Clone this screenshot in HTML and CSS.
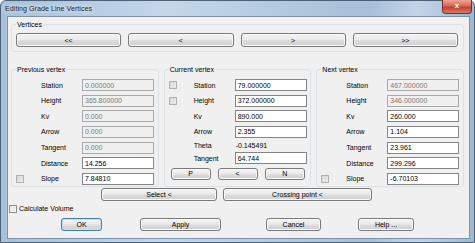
FILE: index.html
```html
<!DOCTYPE html>
<html lang="en">
<head>
    <meta charset="UTF-8">
    <title>Editing Grade Line Vertices</title>
    <link rel="stylesheet" href="styles.css">
</head>
<body>
    <div class="window">
        <div class="titlebar">
            <span class="title">Editing Grade Line Vertices</span>
            <div class="close">x</div>
        </div>
        <div class="client">
            <fieldset class="group vertices">
                <legend>Vertices</legend>
                <div class="nav">
                    <button>&lt;&lt;</button>
                    <button>&lt;</button>
                    <button>&gt;</button>
                    <button>&gt;&gt;</button>
                </div>
            </fieldset>

            <div class="groups">
                <fieldset class="group">
                    <legend>Previous vertex</legend>
                    <div class="fields">
                        <span></span><label>Station</label><input type="text" value="0.000000" disabled>
                        <span></span><label>Height</label><input type="text" value="365.800000" disabled>
                        <span></span><label>Kv</label><input type="text" value="0.000" disabled>
                        <span></span><label>Arrow</label><input type="text" value="0.000" disabled>
                        <span></span><label>Tangent</label><input type="text" value="0.000" disabled>
                        <span></span><label>Distance</label><input type="text" value="14.256">
                        <input type="checkbox" class="check" disabled><label>Slope</label><input type="text" value="7.84810">
                    </div>
                </fieldset>

                <fieldset class="group">
                    <legend>Current vertex</legend>
                    <div class="fields current">
                        <input type="checkbox" class="check" disabled><label>Station</label><input type="text" value="79.000000">
                        <input type="checkbox" class="check" disabled><label>Height</label><input type="text" value="372.000000">
                        <span></span><label>Kv</label><input type="text" value="890.000">
                        <span></span><label>Arrow</label><input type="text" value="2.355">
                        <span></span><label>Theta</label><span class="value">-0.145491</span>
                        <span></span><label>Tangent</label><input type="text" value="64.744">
                        <div class="step">
                            <button>P</button>
                            <button>&lt;</button>
                            <button>N</button>
                        </div>
                    </div>
                </fieldset>

                <fieldset class="group">
                    <legend>Next vertex</legend>
                    <div class="fields">
                        <span></span><label>Station</label><input type="text" value="467.000000" disabled>
                        <span></span><label>Height</label><input type="text" value="346.000000" disabled>
                        <span></span><label>Kv</label><input type="text" value="260.000">
                        <span></span><label>Arrow</label><input type="text" value="1.104">
                        <span></span><label>Tangent</label><input type="text" value="23.961">
                        <span></span><label>Distance</label><input type="text" value="299.296">
                        <input type="checkbox" class="check" disabled><label>Slope</label><input type="text" value="-6.70103">
                    </div>
                </fieldset>
            </div>

            <div class="select-row">
                <button class="btn-select">Select &lt;</button>
                <button class="btn-crossing">Crossing point &lt;</button>
            </div>

            <label class="calc"><input type="checkbox" class="check"> Calculate Volume</label>

            <div class="actions">
                <button class="btn-ok">OK</button>
                <button class="btn-apply">Apply</button>
                <button class="btn-cancel">Cancel</button>
                <button class="btn-help">Help ...</button>
            </div>
        </div>
    </div>
</body>
</html>
```

FILE: styles.css
```css
* {
    box-sizing: border-box;
}
body {
    margin: 0;
    font-family: "Liberation Sans", Arial, sans-serif;
    font-size: 7px;
    color: #000;
    background: #fff;
}
.window {
    width: 475px;
    height: 243px;
    border: 1px solid #4b6177;
    border-radius: 6px 6px 0 0;
    padding: 0 5px 4px 7px;
    background: linear-gradient(to right, #a6c1da, #c4d7e9 35%, #b2c9de 60%, #a7c0d7 78%, #c2d5e7 88%, #9db8d2);
    display: flex;
    flex-direction: column;
}
.titlebar {
    height: 16px;
    display: flex;
    align-items: flex-start;
}
.title {
    margin: 3px 0 0 -3px;
    font-size: 7.2px;
    line-height: 9px;
    color: #1b1b1b;
    text-shadow: 0 0 4px #fff, 0 0 6px #e8f0f7;
}
.close {
    margin: -1px -3px 0 auto;
    width: 30px;
    height: 14px;
    border: 1px solid #6e2f28;
    border-top: none;
    border-radius: 0 0 4px 4px;
    background: linear-gradient(#eba597, #d66a55 45%, #c4412f 55%, #dc7a5f);
    color: #fff;
    font-weight: bold;
    font-size: 8px;
    line-height: 12px;
    text-align: center;
}
.client {
    width: 461px;
    height: 221px;
    background: #f0f0f0;
    box-shadow: 0 0 0 1px #7d93a8;
    padding: 3px 0 0 3px;
}
.group {
    border: 1px solid #dce3e8;
    border-radius: 3px;
    margin: 0;
    min-width: 0;
    padding: 5px 4px 1px 4px;
}
.group legend {
    padding: 0 1px;
    margin-left: 0;
    line-height: 9px;
}
.vertices {
    width: 453px;
    padding: 4px 5px 4px 4px;
}
.nav {
    display: grid;
    grid-template-columns: repeat(4, 1fr);
    column-gap: 7px;
}
.nav button {
    height: 14px;
}
button {
    font-family: inherit;
    font-size: 7px;
    color: #000;
    height: 13px;
    padding: 0;
    border: 1px solid #7a7a7a;
    border-radius: 3px;
    background: linear-gradient(#f3f3f3, #ebebeb 48%, #dddddd 52%, #cfcfcf);
    box-shadow: inset 0 0 0 1px #fbfbfb;
}
.groups {
    width: 453px;
    margin-top: 13px;
    display: grid;
    grid-template-columns: repeat(3, 1fr);
    column-gap: 5px;
}
.fields {
    display: grid;
    grid-template-columns: 25px 41px 72px;
    grid-auto-rows: 12px;
    row-gap: 3.67px;
    align-items: center;
}
.fields.current {
    grid-template-rows: 12px 12px 12px 12px 7px 12px 12px;
}
.fields label {
    line-height: 9px;
}
input[type="text"] {
    width: 72px;
    height: 12px;
    margin: 0;
    padding: 0 2px;
    font-family: inherit;
    font-size: 7px;
    color: #000;
    background: #fff;
    border: 1px solid #858585;
    border-radius: 0;
    outline: none;
}
input[type="text"]:disabled {
    background: #f0f0f0;
    color: #7a7a7a;
    border-color: #a9a9a9;
}
.check {
    appearance: none;
    -webkit-appearance: none;
    width: 8px;
    height: 8px;
    margin: 0;
    border: 1px solid #8e8f8f;
    background: linear-gradient(135deg, #dcdcdc, #f8f8f8);
    box-shadow: inset 0 0 0 1px #f4f4f4;
}
.check:disabled {
    border-color: #b1b1b1;
    background: linear-gradient(135deg, #d6d6d6, #ececec);
    box-shadow: none;
}
.value {
    padding-left: 1px;
    line-height: 9px;
}
.step {
    grid-column: 1 / -1;
    display: grid;
    grid-template-columns: repeat(3, 40px);
    column-gap: 7px;
    padding-left: 2px;
}
.step button {
    height: 12px;
}
.select-row {
    display: flex;
    margin-top: 1px;
    padding-left: 90px;
    column-gap: 6px;
}
.btn-select {
    width: 116px;
}
.btn-crossing {
    width: 149px;
}
.calc {
    display: flex;
    align-items: center;
    column-gap: 2px;
    height: 8px;
    margin: 4px 0 0 -2px;
    line-height: 8px;
}
.actions {
    display: flex;
    margin-top: 5px;
}
.btn-ok {
    width: 41px;
    margin-left: 50px;
    border-color: #3c7fb1;
    box-shadow: inset 0 0 0 1px #bfe6fa;
}
.btn-apply {
    width: 81px;
    margin-left: 38px;
}
.btn-cancel {
    width: 55px;
    margin-left: 45px;
}
.btn-help {
    width: 56px;
    margin-left: 37px;
}
```
